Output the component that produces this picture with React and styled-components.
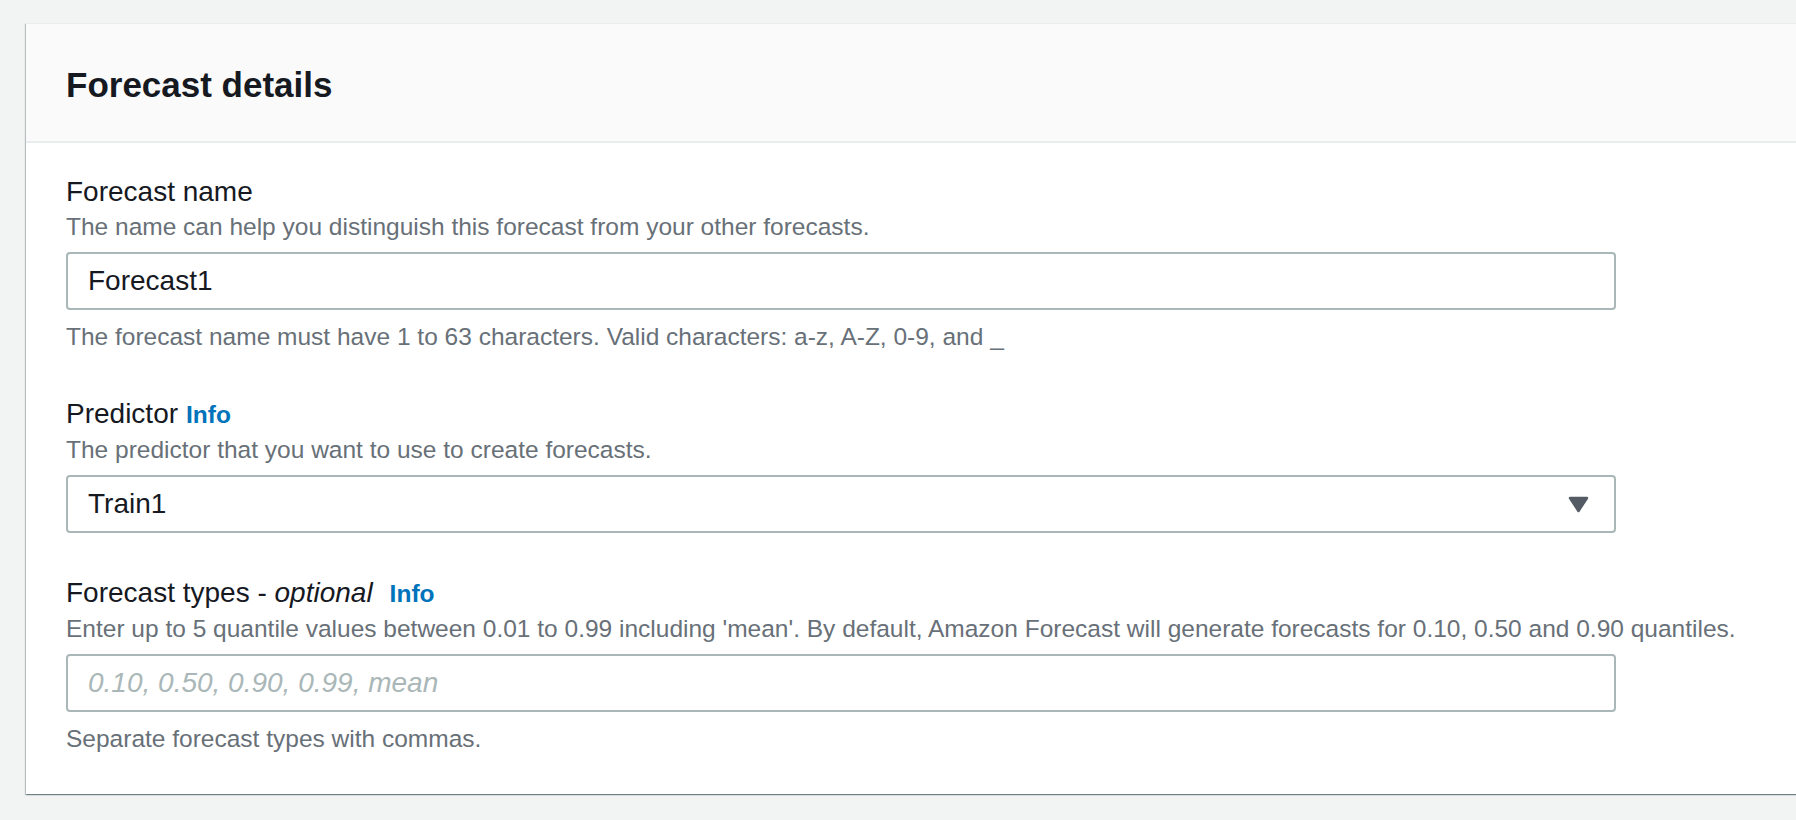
import React from 'react';
import styled, { createGlobalStyle } from 'styled-components';

const GlobalStyle = createGlobalStyle`
  html, body {
    margin: 0;
    padding: 0;
    background: #f2f3f3;
    overflow: hidden;
  }
  body {
    font-family: "Liberation Sans", Arial, sans-serif;
    -webkit-font-smoothing: antialiased;
  }
  * { box-sizing: border-box; }
`;

const Page = styled.main`
  width: 1796px;
  height: 820px;
  padding: 23px 0 0 26px;
  overflow: hidden;
`;

const Card = styled.section`
  width: 1800px;
  background: #ffffff;
  border-top: 1px solid #eaeded;
  box-shadow: 0 1px 1px 0 rgba(0, 28, 36, 0.3),
    1px 1px 1px 0 rgba(0, 28, 36, 0.15),
    -1px 1px 1px 0 rgba(0, 28, 36, 0.2);
`;

const CardHeader = styled.header`
  background: #fafafa;
  border-bottom: 2px solid #eaeded;
  padding: 40px 40px 35px;
`;

const Title = styled.h2`
  margin: 0;
  font-size: 35px;
  line-height: 42px;
  font-weight: 700;
  color: #16191f;
`;

const CardBody = styled.div`
  display: flex;
  flex-direction: column;
  gap: 42px;
  padding: 31px 40px 38px;
`;

const Field = styled.div`
  display: flex;
  flex-direction: column;
`;

const Label = styled.div`
  font-size: 28px;
  line-height: 36px;
  color: #16191f;
`;

const Optional = styled.em`
  font-style: italic;
`;

const InfoLink = styled.a`
  margin-left: ${(p) => p.$gap}px;
  font-size: 24.5px;
  font-weight: 700;
  color: #0073bb;
  text-decoration: none;
  cursor: pointer;
`;

const Description = styled.div`
  font-size: 24.5px;
  line-height: 34px;
  color: #687078;
  margin-bottom: 8px;
  white-space: nowrap;
`;

const Constraint = styled.div`
  font-size: 24.5px;
  line-height: 34px;
  color: #687078;
  margin-top: 10px;
  white-space: nowrap;
`;

const TextInput = styled.input`
  width: 1550px;
  height: 58px;
  border: 2px solid #aab7b8;
  border-radius: 4px;
  padding: 0 20px;
  font-family: inherit;
  font-size: 28px;
  color: #16191f;
  background: #ffffff;
  outline: none;

  &::placeholder {
    font-style: italic;
    color: #aab7b8;
    opacity: 1;
  }
`;

const Select = styled.div`
  width: 1550px;
  height: 58px;
  border: 2px solid #aab7b8;
  border-radius: 4px;
  padding: 0 25px 0 20px;
  display: flex;
  align-items: center;
  justify-content: space-between;
  font-size: 28px;
  color: #16191f;
  background: #ffffff;
  cursor: pointer;
`;

const Caret = () => (
  <svg width="21" height="17" viewBox="0 0 21 17" aria-hidden="true">
    <path
      d="M2 2 L19 2 L10.5 15 Z"
      fill="#545b64"
      stroke="#545b64"
      strokeWidth="2.5"
      strokeLinejoin="round"
    />
  </svg>
);

export default function App() {
  return (
    <>
      <GlobalStyle />
      <Page>
        <Card>
          <CardHeader>
            <Title>Forecast details</Title>
          </CardHeader>
          <CardBody>
            <Field>
              <Label>Forecast name</Label>
              <Description>
                The name can help you distinguish this forecast from your other forecasts.
              </Description>
              <TextInput defaultValue="Forecast1" />
              <Constraint>
                The forecast name must have 1 to 63 characters. Valid characters: a-z, A-Z, 0-9, and _
              </Constraint>
            </Field>

            <Field>
              <Label>
                Predictor<InfoLink $gap={8}>Info</InfoLink>
              </Label>
              <Description>The predictor that you want to use to create forecasts.</Description>
              <Select role="combobox" aria-expanded="false">
                <span>Train1</span>
                <Caret />
              </Select>
            </Field>

            <Field>
              <Label>
                Forecast types - <Optional>optional</Optional>
                <InfoLink $gap={17}>Info</InfoLink>
              </Label>
              <Description>
                Enter up to 5 quantile values between 0.01 to 0.99 including 'mean'. By default, Amazon Forecast will generate forecasts for 0.10, 0.50 and 0.90 quantiles.
              </Description>
              <TextInput placeholder="0.10, 0.50, 0.90, 0.99, mean" />
              <Constraint>Separate forecast types with commas.</Constraint>
            </Field>
          </CardBody>
        </Card>
      </Page>
    </>
  );
}
